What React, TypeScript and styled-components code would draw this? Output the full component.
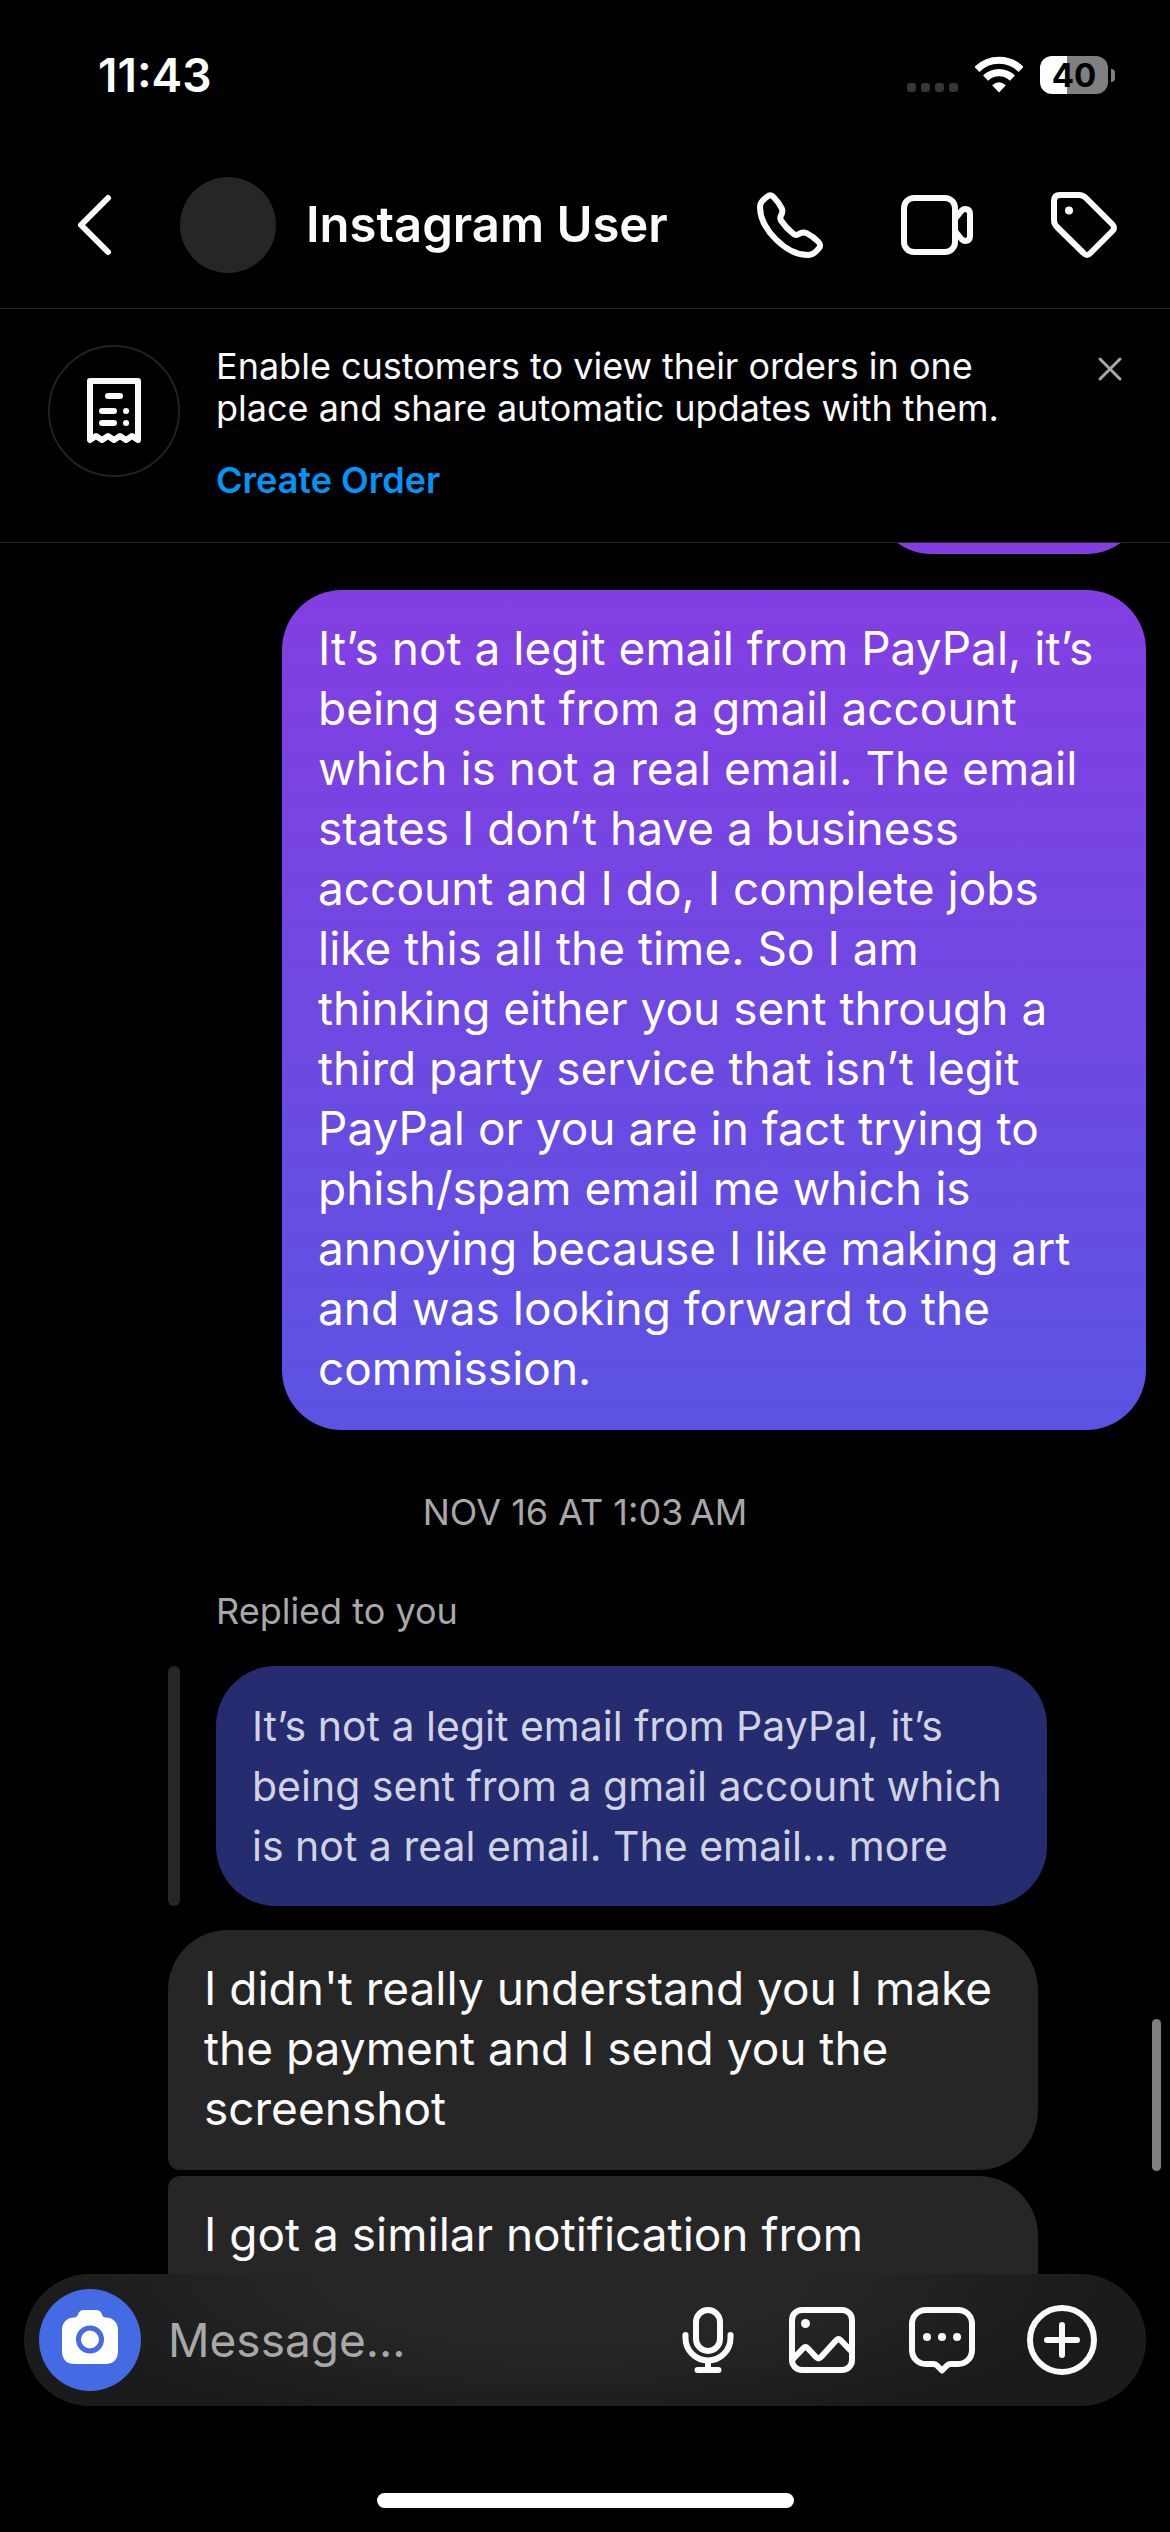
import React from "react";
import styled, { createGlobalStyle } from "styled-components";

const GlobalStyle = createGlobalStyle`
  *, *::before, *::after { box-sizing: border-box; }
  body {
    margin: 0;
    background: #000;
    color: #fafafa;
    font-family: Inter, Roboto, "Liberation Sans", sans-serif;
  }
  h1, p { margin: 0; }
  button, input { font: inherit; color: inherit; }
`;

const Screen = styled.div`
  display: flex;
  flex-direction: column;
  height: 100vh;
  overflow: hidden;
`;

const StatusBar = styled.div`
  display: flex;
  align-items: center;
  justify-content: space-between;
  padding: 48px 55px 39px 98px;
  color: #fff;
`;

const Clock = styled.time`
  font-size: 46px;
  line-height: 54px;
  font-weight: 600;
`;

const StatusIcons = styled.div`
  display: flex;
  align-items: center;
  gap: 17px;
`;

const Battery = styled.div`
  display: flex;
  align-items: center;
  gap: 3px;

  &::after {
    content: "";
    width: 4px;
    height: 13px;
    border-radius: 0 6px 6px 0;
    background: #808080;
  }
`;

const BatteryLevel = styled.span<{ $level: number }>`
  width: 68px;
  border-radius: 12px;
  background: linear-gradient(
    to right,
    #fff ${(p) => p.$level}%,
    #808080 ${(p) => p.$level}%
  );
  color: #000;
  font-size: 33px;
  line-height: 38px;
  font-weight: 700;
  text-align: center;
`;

const Header = styled.header`
  display: flex;
  align-items: center;
  height: 168px;
  padding: 0 50px 0 48px;
  border-bottom: 1px solid #262626;
`;

const IconButton = styled.button`
  display: flex;
  flex: none;
  align-items: center;
  justify-content: center;
  padding: 0;
  border: 0;
  background: none;
  cursor: pointer;
`;

const Avatar = styled.div`
  flex: none;
  width: 96px;
  height: 96px;
  margin: 0 30px 0 60px;
  border-radius: 50%;
  background: #262626;
`;

const Title = styled.h1`
  flex: 1;
  font-size: 49px;
  line-height: 60px;
  font-weight: 600;
  white-space: nowrap;
`;

const HeaderActions = styled.div`
  display: flex;
  gap: 75px;
`;

const Banner = styled.section`
  display: flex;
  align-items: flex-start;
  padding: 36px 36px 41px 48px;
  border-bottom: 1px solid #262626;
`;

const BannerIcon = styled.div`
  display: flex;
  flex: none;
  align-items: center;
  justify-content: center;
  width: 132px;
  height: 132px;
  margin-right: 36px;
  border: 2px solid #212121;
  border-radius: 50%;
`;

const BannerBody = styled.div`
  flex: 1;
  font-size: 36px;
  line-height: 42px;
`;

const BannerLink = styled.a`
  display: inline-block;
  margin-top: 30px;
  color: #0095f6;
  font-weight: 600;
  text-decoration: none;
`;

const Thread = styled.main`
  position: relative;
  display: flex;
  flex: 1;
  flex-direction: column;
  min-height: 0;
  padding: 0 24px 0 168px;
  overflow: hidden;
`;

const Bubble = styled.p`
  flex: none;
  padding: 28px 36px 32px;
  border-radius: 60px;
  font-size: 46px;
  line-height: 60px;
  white-space: pre-line;
`;

const SentBubble = styled(Bubble)`
  align-self: flex-end;
  width: 864px;
  max-width: 100%;
  margin-top: 36px;
  background: linear-gradient(#833ee2, #5b53e2);
  color: #fff;
`;

const EarlierBubble = styled(Bubble)`
  align-self: flex-end;
  width: 274px;
  height: 120px;
  margin-top: -109px;
  background: #833ee2;
`;

const ReceivedBubble = styled(Bubble)<{ $first?: boolean }>`
  width: 870px;
  max-width: 100%;
  min-height: 240px;
  margin-top: ${(p) => (p.$first ? 24 : 6)}px;
  border-radius: ${(p) => (p.$first ? "60px 60px 60px 12px" : "12px 60px 60px 12px")};
  background: #262626;
`;

const DateLabel = styled.p`
  margin: 61px 0 57px -144px;
  color: #a8a8a8;
  font-size: 36px;
  line-height: 42px;
  text-align: center;
`;

const ReplyLabel = styled.p`
  margin: 0 0 34px 48px;
  color: #a8a8a8;
  font-size: 36px;
  line-height: 42px;
`;

const Quote = styled.div`
  display: flex;
  flex: none;
  gap: 36px;

  &::before {
    content: "";
    width: 12px;
    border-radius: 6px;
    background: #262626;
  }
`;

const QuoteBubble = styled(Bubble)`
  width: 831px;
  padding: 30px 36px;
  background: linear-gradient(#272b70, #232d70);
  color: #d2d3e2;
  font-size: 41px;
`;

const ScrollThumb = styled.div`
  position: absolute;
  right: 9px;
  bottom: 103px;
  width: 9px;
  height: 152px;
  border-radius: 5px;
  background: #808080;
`;

const Composer = styled.form`
  display: flex;
  flex: none;
  align-items: center;
  height: 132px;
  margin: 0 24px;
  padding: 0 48px 0 15px;
  border-radius: 66px;
  background: radial-gradient(ellipse 48% 120% at 48% 0, #262626 45%, #1b1b1b 100%);
`;

const CameraButton = styled(IconButton)`
  width: 102px;
  height: 102px;
  border-radius: 50%;
  background: #446be3;
`;

const MessageInput = styled.input`
  flex: 1;
  min-width: 0;
  padding: 0 24px 0 27px;
  border: 0;
  outline: 0;
  background: none;
  font-size: 46px;
  line-height: 60px;

  &::placeholder {
    color: #a8a8a8;
    opacity: 1;
  }
`;

const ComposerActions = styled.div`
  display: flex;
  gap: 48px;
`;

const HomeArea = styled.div`
  display: flex;
  justify-content: center;
  padding: 87px 0 24px;

  &::after {
    content: "";
    width: 417px;
    height: 15px;
    border-radius: 8px;
    background: #fff;
  }
`;

const LineIcon = styled.svg`
  display: block;
  flex: none;
  fill: none;
  stroke: #fafafa;
  stroke-width: 6px;
  stroke-linecap: round;
  stroke-linejoin: round;

  .dot {
    fill: #fafafa;
    stroke: none;
  }
`;

type IconProps = { viewBox?: string; children: React.ReactNode };

const Icon = ({ viewBox = "0 0 72 72", children }: IconProps) => (
  <LineIcon width={72} height={72} viewBox={viewBox} aria-hidden="true">
    {children}
  </LineIcon>
);

const SignalIcon = () => (
  <svg width="51" height="36" viewBox="0 0 51 36" fill="#363636" aria-hidden="true">
    {[0, 14, 28, 42].map((x) => (
      <rect key={x} x={x} y="26" width="9" height="9" rx="3" />
    ))}
  </svg>
);

const WifiIcon = () => (
  <svg width="48" height="38" viewBox="0 0 48 38" fill="none" stroke="#fff" strokeWidth="7.2" aria-hidden="true">
    <path d="M1.9 13.4A31.3 31.3 0 0 1 46.1 13.4" />
    <path d="M10.6 22.1A19 19 0 0 1 37.4 22.1" />
    <path d="M24 36.5L17.2 29.2Q24 23.2 30.8 29.2Z" fill="#fff" stroke="none" />
  </svg>
);

const CameraIcon = () => (
  <svg width="60" height="60" viewBox="0 0 60 60" aria-hidden="true">
    <path
      fill="#fff"
      d="M24 0H36C39.5 0 41 1.5 42 4.500C42.800 6.500 43.500 7.500 46 7.500C53.500 8 58 12.500 58 20V41C58 49.500 53.500 54 45 54H15C6.500 54 2 49.500 2 41V20C2 12.500 6.500 8 14 7.500C16.500 7.500 17.200 6.500 18 4.500C19 1.500 20.500 0 24 0Z"
    />
    <circle cx="30" cy="29.5" r="11.5" fill="none" stroke="#446be3" strokeWidth="5" />
  </svg>
);

const sentText = `It’s not a legit email from PayPal, it’s
being sent from a gmail account
which is not a real email. The email
states I don’t have a business
account and I do, I complete jobs
like this all the time. So I am
thinking either you sent through a
third party service that isn’t legit
PayPal or you are in fact trying to
phish/spam email me which is
annoying because I like making art
and was looking forward to the
commission.`;

const quoteText = `It’s not a legit email from PayPal, it’s
being sent from a gmail account which
is not a real email. The email... more`;

const receivedText = `I didn't really understand you I make
the payment and I send you the
screenshot`;

export default function App() {
  return (
    <Screen>
      <GlobalStyle />
      <StatusBar>
        <Clock>11:43</Clock>
        <StatusIcons>
          <SignalIcon />
          <WifiIcon />
          <Battery>
            <BatteryLevel $level={40}>40</BatteryLevel>
          </Battery>
        </StatusIcons>
      </StatusBar>

      <Header>
        <IconButton type="button" aria-label="Back">
          <Icon>
            <path d="M60 9L33 36L60 63" />
          </Icon>
        </IconButton>
        <Avatar />
        <Title>Instagram User</Title>
        <HeaderActions>
          <IconButton type="button" aria-label="Audio call">
            <Icon>
              <path d="M15 6.500C11 9 6 13 6 18C6 40 32 66 54 66C60 66 63 62 65.500 58.500C66.500 57 66 54.500 64 52.500C60 48.500 56 46 52.500 44.200C49 42.500 47 43.500 45 45C43 46.300 41 46.200 39 44.500C34.500 41 30 36 27 31.500C26 29.500 26 28 27.200 26C28.500 23.500 29 22 27.800 19.500C25.500 14.500 22.500 11 19.500 8C18 6.300 16.500 5.800 15 6.500Z" />
            </Icon>
          </IconButton>
          <IconButton type="button" aria-label="Video call">
            <Icon>
              <rect x="3" y="9" width="51" height="54" rx="10" />
              <path d="M54 30L60 22.500C62.500 19 69 19 69 25V47C69 53 62.500 53 60 49.500L54 42" />
            </Icon>
          </IconButton>
          <IconButton type="button" aria-label="Labels">
            <Icon>
              <path d="M6 12C6 8 8 6 12 6H31C34 6 36 7 38 9L64.500 35.500C66.500 37.500 66.500 40 64.500 42L42.500 64C40.500 66.500 37.500 66.500 35.500 64L9 38C7 36 6 34 6 31Z" />
              <circle className="dot" cx="21" cy="21.5" r="4" />
            </Icon>
          </IconButton>
        </HeaderActions>
      </Header>

      <Banner>
        <BannerIcon>
          <Icon>
            <path d="M12 65V6H60V65L54 61L48 65L42 61L36 65L30 61L24 65L18 61Z" />
            <path d="M30 21H42M24 36H36M24 48H36M48 36H48.100M48 48H48.100" />
          </Icon>
        </BannerIcon>
        <BannerBody>
          <p>
            Enable customers to view their orders in one
            <br />
            place and share automatic updates with them.
          </p>
          <BannerLink href="#create-order">Create Order</BannerLink>
        </BannerBody>
        <IconButton type="button" aria-label="Dismiss">
          <svg width="48" height="48" viewBox="0 0 48 48" stroke="#a8a8a8" strokeWidth="3" strokeLinecap="round" aria-hidden="true">
            <path d="M14 14L34 34M34 14L14 34" />
          </svg>
        </IconButton>
      </Banner>

      <Thread>
        <EarlierBubble />
        <SentBubble>{sentText}</SentBubble>
        <DateLabel>NOV 16 AT 1:03{"\u202f"}AM</DateLabel>
        <ReplyLabel>Replied to you</ReplyLabel>
        <Quote>
          <QuoteBubble>{quoteText}</QuoteBubble>
        </Quote>
        <ReceivedBubble $first>{receivedText}</ReceivedBubble>
        <ReceivedBubble>I got a similar notification from</ReceivedBubble>
        <ScrollThumb />
      </Thread>

      <Composer onSubmit={(e) => e.preventDefault()}>
        <CameraButton type="button" aria-label="Camera">
          <CameraIcon />
        </CameraButton>
        <MessageInput type="text" aria-label="Message" placeholder="Message..." />
        <ComposerActions>
          <IconButton type="button" aria-label="Voice message">
            <Icon viewBox="-6 0 72 72">
              <rect x="24" y="6" width="24" height="41" rx="12" />
              <path d="M13.500 31V34A22.500 22.500 0 0 0 58.500 34V31M36 57V66M25.500 66H46.500" />
            </Icon>
          </IconButton>
          <IconButton type="button" aria-label="Gallery">
            <Icon>
              <rect x="6" y="6" width="60" height="60" rx="10" />
              <circle className="dot" cx="19.5" cy="19.5" r="4.500" />
              <path d="M7 55L17 44.500Q19.500 42 22 44.500L30 53Q32.500 55.500 35 53L50 36.500Q52.500 34 55 36.500L65 47" />
            </Icon>
          </IconButton>
          <IconButton type="button" aria-label="Stickers">
            <Icon>
              <path d="M20 6H52C60 6 66 12 66 20V46C66 54 60 60 52 60H45C43 60 42 60.500 41 61.500L36 66.500L31 61.500C30 60.500 29 60 27 60H20C12 60 6 54 6 46V20C6 12 12 6 20 6Z" />
              <circle className="dot" cx="21" cy="33" r="4" />
              <circle className="dot" cx="36" cy="33" r="4" />
              <circle className="dot" cx="51" cy="33" r="4" />
            </Icon>
          </IconButton>
          <IconButton type="button" aria-label="More">
            <Icon>
              <circle cx="36" cy="36" r="32" />
              <path d="M21 36H51M36 21V51" />
            </Icon>
          </IconButton>
        </ComposerActions>
      </Composer>
      <HomeArea />
    </Screen>
  );
}
